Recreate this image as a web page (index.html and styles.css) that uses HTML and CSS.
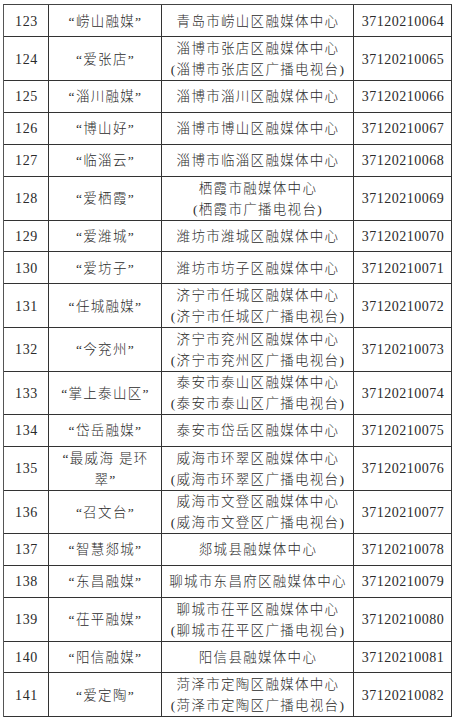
FILE: index.html
```html
<!DOCTYPE html>
<html lang="zh-CN">
<head>
<meta charset="utf-8">
<link rel="stylesheet" href="styles.css">
</head>
<body>
<div class="table">
  <div class="row"><div class="c n">123</div><div class="c">“崂山融媒”</div><div class="c">青岛市崂山区融媒体中心</div><div class="c d">37120210064</div></div>
  <div class="row tall"><div class="c n">124</div><div class="c">“爱张店”</div><div class="c">淄博市张店区融媒体中心<br>(淄博市张店区广播电视台)</div><div class="c d">37120210065</div></div>
  <div class="row"><div class="c n">125</div><div class="c">“淄川融媒”</div><div class="c">淄博市淄川区融媒体中心</div><div class="c d">37120210066</div></div>
  <div class="row"><div class="c n">126</div><div class="c">“博山好”</div><div class="c">淄博市博山区融媒体中心</div><div class="c d">37120210067</div></div>
  <div class="row"><div class="c n">127</div><div class="c">“临淄云”</div><div class="c">淄博市临淄区融媒体中心</div><div class="c d">37120210068</div></div>
  <div class="row tall"><div class="c n">128</div><div class="c">“爱栖霞”</div><div class="c">栖霞市融媒体中心<br>(栖霞市广播电视台)</div><div class="c d">37120210069</div></div>
  <div class="row"><div class="c n">129</div><div class="c">“爱潍城”</div><div class="c">潍坊市潍城区融媒体中心</div><div class="c d">37120210070</div></div>
  <div class="row"><div class="c n">130</div><div class="c">“爱坊子”</div><div class="c">潍坊市坊子区融媒体中心</div><div class="c d">37120210071</div></div>
  <div class="row tall"><div class="c n">131</div><div class="c">“任城融媒”</div><div class="c">济宁市任城区融媒体中心<br>(济宁市任城区广播电视台)</div><div class="c d">37120210072</div></div>
  <div class="row tall"><div class="c n">132</div><div class="c">“今兖州”</div><div class="c">济宁市兖州区融媒体中心<br>(济宁市兖州区广播电视台)</div><div class="c d">37120210073</div></div>
  <div class="row tall"><div class="c n">133</div><div class="c">“掌上泰山区”</div><div class="c">泰安市泰山区融媒体中心<br>(泰安市泰山区广播电视台)</div><div class="c d">37120210074</div></div>
  <div class="row"><div class="c n">134</div><div class="c">“岱岳融媒”</div><div class="c">泰安市岱岳区融媒体中心</div><div class="c d">37120210075</div></div>
  <div class="row tall"><div class="c n">135</div><div class="c">“最威海 是环<br>翠”</div><div class="c">威海市环翠区融媒体中心<br>(威海市环翠区广播电视台)</div><div class="c d">37120210076</div></div>
  <div class="row tall"><div class="c n">136</div><div class="c">“召文台”</div><div class="c">威海市文登区融媒体中心<br>(威海市文登区广播电视台)</div><div class="c d">37120210077</div></div>
  <div class="row"><div class="c n">137</div><div class="c">“智慧郯城”</div><div class="c">郯城县融媒体中心</div><div class="c d">37120210078</div></div>
  <div class="row"><div class="c n">138</div><div class="c">“东昌融媒”</div><div class="c">聊城市东昌府区融媒体中心</div><div class="c d">37120210079</div></div>
  <div class="row tall"><div class="c n">139</div><div class="c">“茌平融媒”</div><div class="c">聊城市茌平区融媒体中心<br>(聊城市茌平区广播电视台)</div><div class="c d">37120210080</div></div>
  <div class="row"><div class="c n">140</div><div class="c">“阳信融媒”</div><div class="c">阳信县融媒体中心</div><div class="c d">37120210081</div></div>
  <div class="row tall"><div class="c n">141</div><div class="c">“爱定陶”</div><div class="c">菏泽市定陶区融媒体中心<br>(菏泽市定陶区广播电视台)</div><div class="c d">37120210082</div></div>
</div>
</body>
</html>
```

FILE: styles.css
```css
html, body {
  margin: 0;
  padding: 0;
  background: #ffffff;
}
body {
  font-family: "Liberation Serif", "Noto Sans CJK SC", serif;
  color: #2b2b2b;
}
.table {
  margin: 4px 0 0 3px;
  width: 449px;
  border-top: 1px solid #444;
  border-left: 1px solid #555;
  box-sizing: border-box;
}
.row {
  display: grid;
  grid-template-columns: 45px 113px 192px 98px;
  height: 32px;
}
.row.tall {
  height: 43.5px;
}
.c {
  box-sizing: border-box;
  border-right: 1px solid #333;
  border-bottom: 1px solid #333;
  display: flex;
  align-items: center;
  justify-content: center;
  text-align: center;
  font-family: "Liberation Serif", "Noto Sans CJK SC", serif;
  font-weight: 300;
  font-size: 13.5px;
  line-height: 21px;
  letter-spacing: 1.3px;
  padding-left: 1px;
  padding-top: 1px;
}
.n {
  letter-spacing: 0.6px;
  font-size: 14px;
}
.d {
  letter-spacing: 0.5px;
  font-size: 14px;
}
```
